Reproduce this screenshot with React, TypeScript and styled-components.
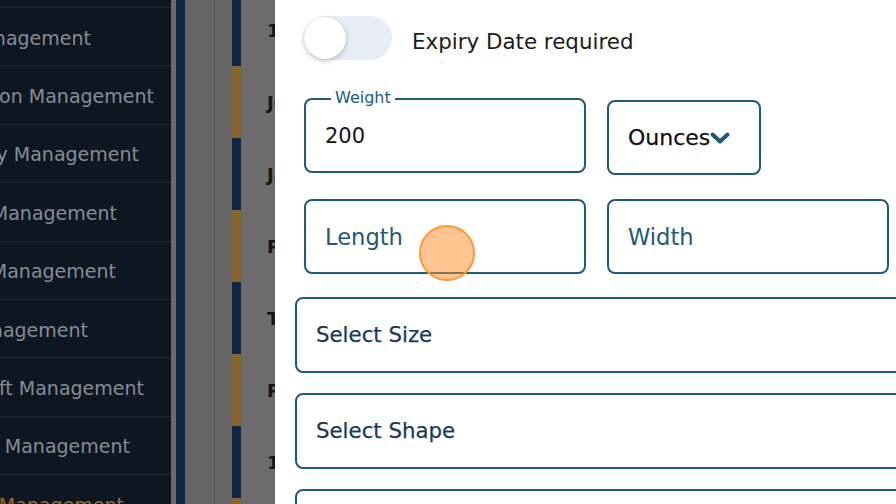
import React from "react";
import styled, { createGlobalStyle } from "styled-components";

const GlobalStyle = createGlobalStyle`
  html, body { margin: 0; padding: 0; }
  body {
    width: 896px;
    height: 504px;
    overflow: hidden;
    font-family: "DejaVu Sans", "Liberation Sans", sans-serif;
  }
  * { box-sizing: border-box; }
`;

const Page = styled.div`
  position: relative;
  width: 896px;
  height: 504px;
  overflow: hidden;
  display: flex;
  background: #666666;
`;

/* ---------- dimmed sidebar ---------- */
const Sidebar = styled.nav`
  width: 171px;
  flex: none;
  background: #0e1721;
  padding-top: 7px;
  display: flex;
  flex-direction: column;
`;

const NavRow = styled.div`
  flex: none;
  height: 58.4px;
  border-top: 1px solid #1f2a36;
  display: flex;
  align-items: center;
  padding-top: 2px;
`;

const NavLabelClip = styled.div<{ $end: number }>`
  width: ${(p) => p.$end}px;
  display: flex;
  justify-content: flex-end;
  overflow: hidden;
`;

const NavLabel = styled.span<{ $active?: boolean }>`
  flex: none;
  white-space: nowrap;
  font-size: 19px;
  color: ${(p) => (p.$active ? "#9a6a2d" : "#868c94")};
`;

/* ---------- dimmed table behind the drawer ---------- */
const Main = styled.div`
  flex: 1;
  display: flex;
`;

const Gutter = styled.div`
  width: 5px;
  flex: none;
  background: #6a6a6a;
`;

const Rail = styled.div`
  width: 9px;
  flex: none;
  background: #0f2741;
`;

const Column = styled.div<{ $w: number; $divider?: boolean }>`
  width: ${(p) => p.$w}px;
  flex: none;
  background: #656565;
  border-right: ${(p) => (p.$divider ? "1px solid #595959" : "none")};
`;

const Table = styled.div`
  flex: 1;
  display: flex;
  flex-direction: column;
  margin-top: -6px;
`;

const TRow = styled.div`
  flex: none;
  height: 72px;
  display: flex;
`;

const StatusBar = styled.div<{ $tone: "navy" | "gold" }>`
  width: 9px;
  flex: none;
  background: ${(p) => (p.$tone === "navy" ? "#0f2741" : "#87632f")};
`;

const Cell = styled.div`
  flex: 1;
  background: #6c6c6c;
  padding-left: 26px;
  display: flex;
  align-items: center;
  font-weight: 700;
  font-size: 18px;
  color: #161616;
  white-space: nowrap;
`;

/* ---------- drawer ---------- */
const Drawer = styled.aside`
  position: absolute;
  top: 0;
  bottom: 0;
  left: 275px;
  right: 0;
  background: #ffffff;
  padding: 16px 0 0 20px;
  overflow: hidden;
  display: flex;
  flex-direction: column;
`;

const Section = styled.div`
  padding: 0 7px 0 9px;
  display: flex;
  flex-direction: column;
`;

const ToggleRow = styled.div`
  display: flex;
  align-items: center;
  gap: 20px;
  height: 44px;
`;

const Track = styled.div`
  position: relative;
  width: 88px;
  height: 44px;
  border-radius: 22px;
  background: #e7edf5;
  flex: none;
`;

const Knob = styled.div`
  position: absolute;
  top: 1px;
  left: 0;
  width: 42px;
  height: 42px;
  border-radius: 50%;
  background: #ffffff;
  box-shadow: 0 2px 5px rgba(0, 0, 0, 0.22), 0 0 1px rgba(0, 0, 0, 0.15);
`;

const ToggleLabel = styled.span`
  font-size: 21.4px;
  color: #1c1c1c;
  padding-top: 7px;
`;

const FieldRow = styled.div<{ $top: number }>`
  display: flex;
  align-items: flex-start;
  gap: 21px;
  margin-top: ${(p) => p.$top}px;
`;

const Box = styled.div<{ $w?: number; $offset?: number }>`
  position: relative;
  height: 75px;
  ${(p) => (p.$w ? `width: ${p.$w}px; flex: none;` : "flex: 1;")}
  margin-top: ${(p) => p.$offset ?? 0}px;
  border: 2px solid #1e5b7b;
  border-radius: 8px;
  display: flex;
  align-items: center;
  padding-left: 19px;
`;

const FloatLabel = styled.span`
  position: absolute;
  top: -11px;
  left: 25px;
  padding: 0 4px;
  background: #ffffff;
  font-size: 16px;
  line-height: 18px;
  color: #1e5b7b;
`;

const Value = styled.span`
  font-size: 21px;
  color: #141414;
`;

const Placeholder = styled.span`
  font-size: 22.6px;
  color: #22597b;
`;

const UnitText = styled.span`
  font-size: 22px;
  color: #111111;
  -webkit-text-stroke: 0.25px #111111;
`;

const SelectBox = styled.div<{ $top: number }>`
  flex: none;
  height: 76px;
  margin-top: ${(p) => p.$top}px;
  margin-right: -40px;
  border: 2px solid #1e5b7b;
  border-radius: 8px;
  display: flex;
  align-items: center;
  padding-left: 19px;
`;

const SelectText = styled.span`
  font-size: 21.3px;
  color: #163a59;
  -webkit-text-stroke: 0.25px #163a59;
  margin-top: -1px;
`;

const Cursor = styled.div`
  position: absolute;
  left: 419px;
  top: 225px;
  width: 56px;
  height: 56px;
  border-radius: 50%;
  background: rgba(252, 140, 35, 0.5);
  border: 2px solid #ff9733;
  pointer-events: none;
`;

const Chevron = () => (
  <svg width="20" height="12" viewBox="0 0 20 12" style={{ flex: "none", marginTop: 1 }}>
    <path d="M2.5 2.5 L10 9.5 L17.5 2.5" fill="none" stroke="#1e5b7b" strokeWidth="4" strokeLinecap="round" strokeLinejoin="round" />
  </svg>
);

const navItems: { label: string; end: number; active?: boolean }[] = [
  { label: "User Management", end: 91 },
  { label: "Subscription Management", end: 154 },
  { label: "Inventory Management", end: 139 },
  { label: "Product Management", end: 117 },
  { label: "Vendor Management", end: 116 },
  { label: "Coupon Management", end: 88 },
  { label: "Gift Management", end: 144 },
  { label: "Order Management", end: 130 },
  { label: "Review Management", end: 124, active: true },
];

const rows: { tone: "navy" | "gold"; text: string }[] = [
  { tone: "navy", text: "1024" },
  { tone: "gold", text: "John" },
  { tone: "navy", text: "Jane" },
  { tone: "gold", text: "Paul" },
  { tone: "navy", text: "Tom" },
  { tone: "gold", text: "Peter" },
  { tone: "navy", text: "1031" },
  { tone: "gold", text: "Mark" },
];

export default function App() {
  return (
    <>
      <GlobalStyle />
      <Page>
        <Sidebar>
          {navItems.map((n) => (
            <NavRow key={n.label}>
              <NavLabelClip $end={n.end}>
                <NavLabel $active={n.active}>{n.label}</NavLabel>
              </NavLabelClip>
            </NavRow>
          ))}
        </Sidebar>
        <Main>
          <Gutter />
          <Rail />
          <Column $w={30} $divider />
          <Column $w={17} />
          <Table>
            {rows.map((r, i) => (
              <TRow key={i}>
                <StatusBar $tone={r.tone} />
                <Cell>{r.text}</Cell>
              </TRow>
            ))}
          </Table>
        </Main>

        <Drawer>
          <Section>
            <ToggleRow>
              <Track>
                <Knob />
              </Track>
              <ToggleLabel>Expiry Date required</ToggleLabel>
            </ToggleRow>

            <FieldRow $top={38}>
              <Box $w={282}>
                <FloatLabel>Weight</FloatLabel>
                <Value>200</Value>
              </Box>
              <Box $w={154} $offset={2}>
                <UnitText>Ounces</UnitText>
                <Chevron />
              </Box>
            </FieldRow>

            <FieldRow $top={24}>
              <Box $w={282}>
                <Placeholder>Length</Placeholder>
              </Box>
              <Box>
                <Placeholder>Width</Placeholder>
              </Box>
            </FieldRow>
          </Section>

          <SelectBox $top={23}>
            <SelectText>Select Size</SelectText>
          </SelectBox>
          <SelectBox $top={20}>
            <SelectText>Select Shape</SelectText>
          </SelectBox>
          <SelectBox $top={20}>
            <SelectText>Select Color</SelectText>
          </SelectBox>
        </Drawer>

        <Cursor />
      </Page>
    </>
  );
}
